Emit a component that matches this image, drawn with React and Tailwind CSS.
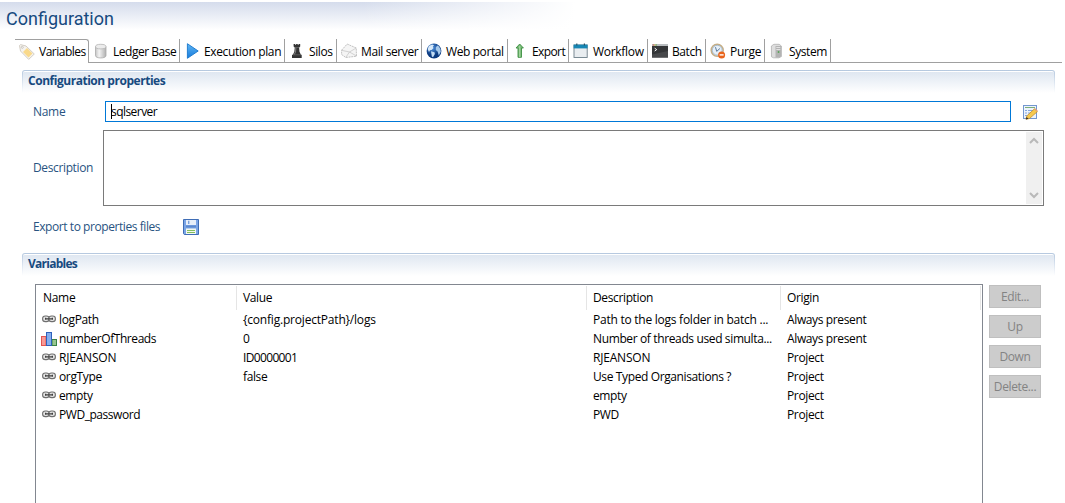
const V = ({ children }) => (
  <svg width="16" height="16" viewBox="0 0 16 16" className="block shrink-0">{children}</svg>
);

const TagIcon = () => (
  <V>
    <path d="M.5 1.5 1.5 .6 7 2 15.3 10 9.7 15.4 1.5 7Z" fill="#f5f3ef" stroke="#d3cdc4" />
    <path d="M8 4 13.5 9.5 9.5 13.5 4 8Z" fill="#f9d98b" />
    <circle cx="3.3" cy="3.3" r="1" fill="#fff" stroke="#b9b3aa" strokeWidth=".7" />
  </V>
);
const DatabaseIcon = () => (
  <V>
    <defs>
      <linearGradient id="cyl">
        <stop offset="0" stopColor="#c4c4c4" /><stop offset=".35" stopColor="#f4f4f4" /><stop offset="1" stopColor="#b0b0b0" />
      </linearGradient>
    </defs>
    <path d="M2.5 3.5v9.2c0 3 10.5 3 10.5 0V3.5Z" fill="url(#cyl)" stroke="#ababab" strokeWidth=".8" />
    <ellipse cx="7.75" cy="3.6" rx="5.2" ry="2.3" fill="#ececec" stroke="#b5b5b5" strokeWidth=".8" />
  </V>
);
const PlayIcon = () => (
  <V>
    <defs>
      <linearGradient id="play" x2="0" y2="1">
        <stop offset="0" stopColor="#5fb6f4" /><stop offset="1" stopColor="#167bdc" />
      </linearGradient>
    </defs>
    <path d="M3.4 .7v14.6L14.2 8Z" fill="url(#play)" stroke="#1977cc" strokeWidth=".9" strokeLinejoin="round" />
  </V>
);
const SiloIcon = () => (
  <V>
    <path d="M4.6 1h1.5v.8h1V1h1.6v.8h1V1h1.5v2.5L10.1 4.6l.4 4.2 1.4 2.9h.8V15H3v-3.3h.9l1.4-2.9.5-4.2L4.6 3.5Z" fill="#343434" />
    <path d="M6.9 4.8 6.5 9 5.3 11.5" stroke="#8a8a8a" fill="none" strokeWidth=".9" />
    <path d="M5.7 4.5h4.6M4.2 11.8h7.6" stroke="#777" strokeWidth=".6" />
  </V>
);
const MailIcon = () => (
  <V>
    <path d="M.6 7.2 6.2 1 15.2 5l.3 8.2L4.8 14.5.6 11.5Z" fill="#f5f5f5" stroke="#b4b4b4" strokeWidth=".8" strokeDasharray="2 .7" />
    <path d="M.6 7.3 8.5 9 15.2 5M4.8 14.3 8.5 9l7 4" fill="none" stroke="#c8c8c8" strokeWidth=".8" />
  </V>
);
const GlobeIcon = () => (
  <V>
    <defs>
      <radialGradient id="globe" cx=".4" cy=".3">
        <stop offset="0" stopColor="#4f91dc" /><stop offset="1" stopColor="#0b3a80" />
      </radialGradient>
    </defs>
    <circle cx="8" cy="8" r="7.4" fill="url(#globe)" />
    <path d="M1.6 6 3 3l3-1.6 2 .8-1.2 1.6L7.5 5 5.6 7 4 7.3 3 9Z" fill="#d6e8f8" />
    <path d="m5 8.2 3.5 1 .4 1.8L7 14.2l-1.2-.8Z" fill="#c2dbf3" />
    <path d="m9.8 4.3 1.7-1.8 1.5.9 1.5 2.8.3 2.6-2 3.6-1.2-3.8L9.8 7Z" fill="#a5c8ea" />
  </V>
);
const ExportIcon = () => (
  <V>
    <path d="M7.7 1 11.4 5H9.5v9.3H6V5H4Z" fill="#76b976" stroke="#3d8f42" strokeWidth=".9" strokeLinejoin="round" />
    <path d="M7.7 3v11" stroke="#a7d8a2" strokeWidth="1.2" />
  </V>
);
const CalendarIcon = () => (
  <V>
    <rect x="1" y="2" width="13.2" height="12.5" fill="#e9edf0" stroke="#6f7f89" strokeWidth=".9" />
    <path d="M.6 1.6h14v3.8H.6Z" fill="#1787b5" />
    <path d="M3.8.5v2M11.4.5v2" stroke="#25556b" strokeWidth="1.2" />
  </V>
);
const ConsoleIcon = () => (
  <V>
    <path d="M0 1h16v13.5H0Z" fill="#343638" />
    <path d="M0 1h16v2H0Z" fill="#b9bdc0" />
    <path d="M.7 2h1.2" stroke="#d84c38" strokeWidth="1.2" /><path d="M2.2 2h1.2" stroke="#e3b52a" strokeWidth="1.2" /><path d="M3.7 2h1.2" stroke="#58a83e" strokeWidth="1.2" />
    <path d="m2.7 5.2 2 1.4-2 1.4" stroke="#fff" fill="none" strokeWidth="1" />
    <path d="M0 11.5 16 8v6.5H0Z" fill="#47494b" />
  </V>
);
const PurgeIcon = () => (
  <V>
    <circle cx="7.2" cy="7.2" r="6" fill="#e7f0f8" stroke="#c6ae85" strokeWidth="1.5" />
    <circle cx="7.2" cy="7.2" r="4.9" fill="none" stroke="#8eabc7" strokeWidth=".7" />
    <path d="m5.5 4.2 1.2 4.2 3.2-2.9" fill="none" stroke="#59799b" />
    <circle cx="11.6" cy="11.9" r="3.5" fill="#e9641c" />
    <path d="M9.6 11.9h4" stroke="#fff" strokeWidth="1.4" />
  </V>
);
const ServerIcon = () => (
  <V>
    <path d="m2.4 3 2.5-1.7h5.3L12.4 3v10.5L10 14.8H4.5l-2-1Z" fill="#dedede" stroke="#b1b1b1" strokeWidth=".8" />
    <path d="M6.5 2.9v11.7h3.7l2-1.1V2.9Z" fill="#b3b3b3" />
    <path d="M7.3 4.5h4M7.3 6.5h4" stroke="#e8e8e8" strokeWidth=".9" />
    <path d="M8.8 9h1.5" stroke="#3a9f3a" strokeWidth="1.4" />
  </V>
);
const LinkIcon = () => (
  <V>
    <g fill="#e4e4e4" stroke="#6f6f6f" strokeWidth="1.1">
      <rect x="1.6" y="4" width="6.6" height="5.6" rx="2.7" />
      <rect x="7.8" y="4" width="6.6" height="5.6" rx="2.7" />
    </g>
    <path d="M4.6 5.8v2M11.4 5.8v2M4.6 6.8h6.8" stroke="#3f3f3f" strokeWidth="1.2" />
  </V>
);
const ChartIcon = () => (
  <V>
    <rect x=".5" y="5.5" width="4.5" height="9" fill="#f79a96" stroke="#e25550" />
    <rect x="11" y="8.5" width="4.5" height="6" fill="#98c78f" stroke="#3b8243" />
    <rect x="5.5" y="1.5" width="5" height="13" fill="#84aeee" stroke="#2f62bb" />
  </V>
);
const SaveIcon = () => (
  <V>
    <path d="M.5.5h15v15H1.3l-.8-.8Z" fill="#7ba5e6" stroke="#3f6db5" />
    <path d="M3 1h10v5H3Z" fill="#e7effa" /><path d="M5 1.8h1.4V5H5Z" fill="#7aa0da" />
    <path d="M3 6.5h10v2H3Z" fill="#5c89d0" />
    <path d="M3 9.5h10V15H3Z" fill="#f4f8ef" /><path d="M4 11.5h8M4 13.5h8" stroke="#82bd5e" strokeWidth="1.2" />
  </V>
);
const EditIcon = () => (
  <V>
    <rect x="1.5" y="1.5" width="13" height="13" fill="#edf3fc" stroke="#7297cf" />
    <path d="M3 3.5h10" stroke="#7cae79" />
    <path d="M3 6.5h2M6 6.5h6M3 9h2M6 9h4M3 11.5h2" stroke="#83a7dd" />
    <path d="m4 15.2.9-3.3 7.6-7.1 2.9 2.8-8 7Z" fill="#f6c94f" stroke="#c28d2b" strokeWidth=".8" />
    <path d="m3.8 15.6.8-2.6 1.9 1.8Z" fill="#3b3122" /><path d="m12.8 4.8 2.5 2.5" stroke="#e0a07c" strokeWidth="1.5" />
  </V>
);

const tabs = [
  ["Variables", TagIcon, "w-[74px] border-t rounded-tr-[3px]", "tracking-[-0.5px]"],
  ["Ledger Base", DatabaseIcon, "w-[91px] border-b pt-px", "tracking-[-0.48px]"],
  ["Execution plan", PlayIcon, "w-[105px] border-b pt-px", "tracking-[-0.36px]"],
  ["Silos", SiloIcon, "w-[52px] border-b pt-px", "tracking-[-0.4px]"],
  ["Mail server", MailIcon, "w-[85px] border-b pt-px", "tracking-[-0.4px]"],
  ["Web portal", GlobeIcon, "w-[86px] border-b pt-px", "tracking-[-0.4px]"],
  ["Export", ExportIcon, "w-[61px] border-b pt-px", "tracking-[-0.6px]"],
  ["Workflow", CalendarIcon, "w-[79px] border-b pt-px", "tracking-[-0.3px]"],
  ["Batch", ConsoleIcon, "w-[58px] border-b pt-px", "tracking-[-0.4px]"],
  ["Purge", PurgeIcon, "w-[59px] border-b pt-px", "tracking-[-0.3px]"],
  ["System", ServerIcon, "w-[66px] border-b pt-px", "tracking-[-0.4px]"],
];

const rows = [
  [LinkIcon, "logPath", "{config.projectPath}/logs", "Path to the logs folder in batch ...", "Always present"],
  [ChartIcon, "numberOfThreads", "0", "Number of threads used simulta...", "Always present"],
  [LinkIcon, "RJEANSON", "ID0000001", "RJEANSON", "Project"],
  [LinkIcon, "orgType", "false", "Use Typed Organisations ?", "Project"],
  [LinkIcon, "empty", "", "empty", "Project"],
  [LinkIcon, "PWD_password", "", "PWD", "Project"],
];

const tracking = {
  "{config.projectPath}/logs": "tracking-[-0.2px]",
  ID0000001: "tracking-[-0.65px]",
  "Path to the logs folder in batch ...": "tracking-[-0.25px]",
  "Use Typed Organisations ?": "tracking-[-0.38px]",
  PWD_password: "tracking-[-0.45px]",
  numberOfThreads: "tracking-[-0.43px]",
  RJEANSON: "tracking-[-0.2px]",
};
const Cell = ({ children }) => <span className={tracking[children] ?? "tracking-[-0.37px]"}>{children}</span>;

const Section = ({ children, track }) => (
  <div className="ml-[22px] h-[23px] w-[1033px] rounded-t-[3px] bg-linear-to-b from-[#b5c8df] to-white px-px pt-px">
    <div className={`h-full rounded-t-[2px] border-t border-white bg-linear-to-b from-[#dfe7f1] to-white pl-[5px] text-[12px] leading-[18px] font-bold text-[#174a7f] ${track}`}>
      {children}
    </div>
  </div>
);

const Chevron = ({ d }) => (
  <svg width="10" height="8" viewBox="0 0 10 8"><path d={d} fill="none" stroke="#b9b9b9" strokeWidth="2" /></svg>
);

export default function App() {
  return (
    <div className="flex h-[503px] w-[1065px] flex-col overflow-hidden bg-white font-['Open_Sans',sans-serif] text-[12px] tracking-[-0.37px] whitespace-nowrap text-black">
      <header className="mt-[2px] h-[37px] shrink-0 bg-linear-to-b from-[#d5dcec] to-white to-75%">
        <div className="h-full bg-linear-to-r from-white/0 from-34% to-white to-54% pl-[6px]">
          <h1 className="font-[Roboto] text-[18px] leading-[33px] tracking-[0px] text-[#174a7f]">Configuration</h1>
        </div>
      </header>
      <nav className="ml-[15px] flex h-6 w-[1047px] shrink-0">
        {tabs.map(([label, Icon, box, track]) => (
          <div key={label} className={`flex shrink-0 items-center gap-1 border-r border-[#a0a0a0] pl-1 ${box}`}>
            <Icon />
            <span className={`pt-px ${track}`}>{label}</span>
          </div>
        ))}
        <div className="flex-1 border-b border-[#a0a0a0]" />
      </nav>
      <div className="mt-[7px] shrink-0"><Section track="tracking-[-0.47px]">Configuration properties</Section></div>
      <div className="mt-[8px] flex h-[21px] shrink-0 items-center pl-[33px] text-[#285381]">
        <label className="w-[72px] pt-px tracking-[-0.3px]">Name</label>
        <div className="flex h-[21px] w-[906px] items-center border border-[#0078d7] pl-[5px] text-black">
          <span className="h-[15px] w-px bg-black" />
          <span className="-ml-px pt-px tracking-[-0.55px]">sqlserver</span>
        </div>
        <div className="ml-[11px]"><EditIcon /></div>
      </div>
      <div className="mt-[8px] flex h-[76px] shrink-0 items-center pl-[33px] text-[#285381]">
        <label className="w-[70px]">Description</label>
        <div className="flex h-full w-[941px] justify-end border border-[#7a7a7a] p-px">
          <div className="flex w-4 flex-col items-center justify-between bg-[#f0f0f0] py-[5px]">
            <Chevron d="M1 6 5 2 9 6" />
            <Chevron d="M1 2 5 6 9 2" />
          </div>
        </div>
      </div>
      <div className="mt-[13px] flex h-4 shrink-0 items-center pl-[33px] text-[#285381]">
        <span className="w-[150px] tracking-[-0.43px]">Export to properties files</span>
        <SaveIcon />
      </div>
      <div className="mt-[18px] shrink-0"><Section track="tracking-[-0.75px]">Variables</Section></div>
      <div className="mt-[8px] flex min-h-0 flex-1 pl-[35px]">
        <div className="w-[948px] border-x border-t border-[#828790]">
          <div className="mt-px flex h-6 items-center">
            <div className="flex h-6 w-[201px] items-center border-r border-[#e5e5e5] pl-[7px] tracking-[-0.3px]">Name</div>
            <div className="flex h-6 w-[350px] items-center border-r border-[#e5e5e5] pl-[6px]">Value</div>
            <div className="flex h-6 w-[194px] items-center border-r border-[#e5e5e5] pl-[6px]">Description</div>
            <div className="flex h-6 w-[200px] items-center border-r border-[#e5e5e5] pl-[6px]">Origin</div>
          </div>
          {rows.map(([Icon, name, value, desc, origin]) => (
            <div key={name} className="flex h-[19px] items-center">
              <div className="flex w-[207px] items-center gap-[2px] pl-[5px]"><Icon /><Cell>{name}</Cell></div>
              <div className="w-[350px]"><Cell>{value}</Cell></div>
              <div className="w-[194px]"><Cell>{desc}</Cell></div>
              <div><Cell>{origin}</Cell></div>
            </div>
          ))}
        </div>
        <div className="ml-[6px] flex flex-col gap-[7px] pt-px">
          {["Edit...", "Up", "Down", "Delete..."].map((b) => (
            <button key={b} className="h-[23px] w-[52px] border border-[#bfbfbf] bg-[#cccccc] text-[#838383]">{b}</button>
          ))}
        </div>
      </div>
    </div>
  );
}
